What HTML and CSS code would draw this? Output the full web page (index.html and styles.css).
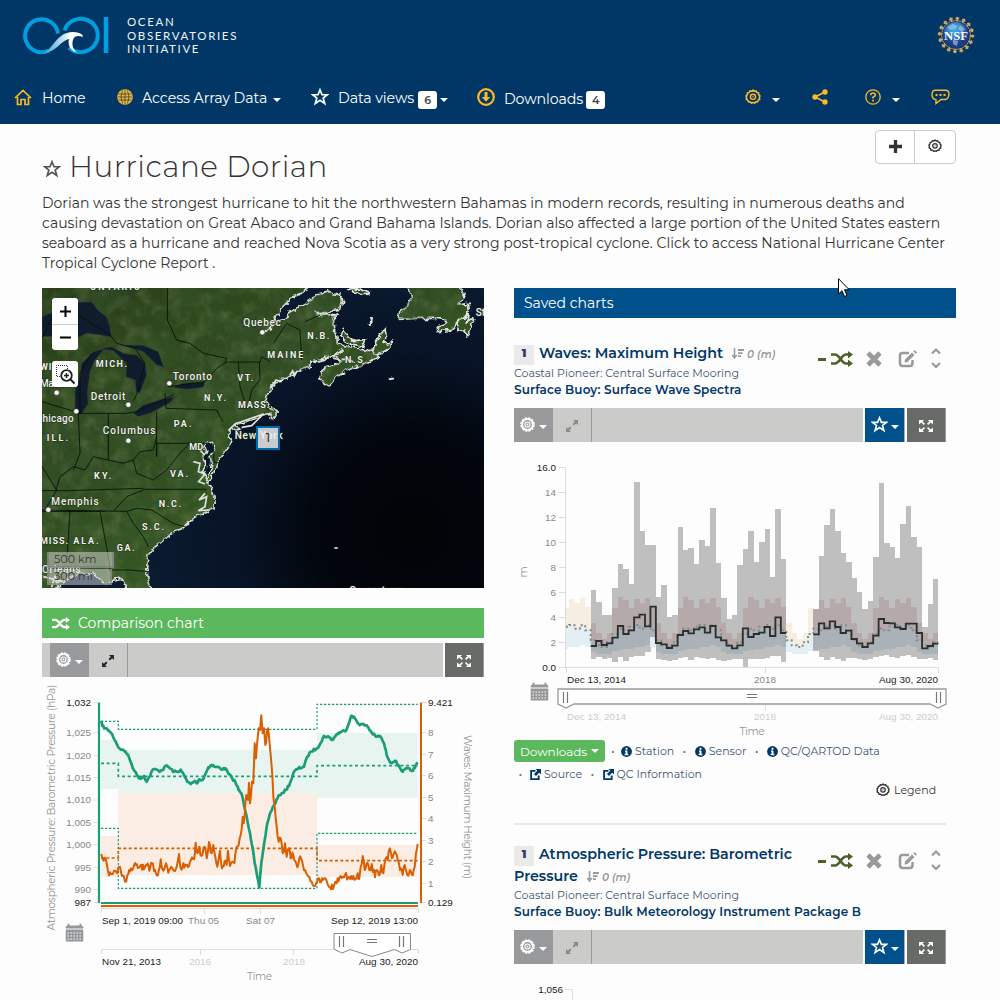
FILE: index.html
```html
<!DOCTYPE html>
<html lang="en">
<head>
<meta charset="utf-8">
<title>Hurricane Dorian - OOI Data Explorer</title>
<link rel="stylesheet" href="styles.css">
</head>
<body>
<svg class="sprite" aria-hidden="true">
  <symbol id="i-gear" viewBox="0 0 16 16"><path d="M8 1.1 9.3 2.3 11 1.9 11.8 3.5 13.5 3.9 13.7 5.6 15 7 14.3 8.5 14.7 10.2 13.2 11.1 12.6 12.8 10.9 12.9 9.6 14.1 8 13.5 6.4 14.1 5.1 12.9 3.4 12.8 2.8 11.1 1.3 10.2 1.7 8.5 1 7 2.3 5.6 2.5 3.9 4.2 3.5 5 1.9 6.7 2.3Z" fill="none" stroke="currentColor" stroke-width="1.6" stroke-linejoin="round"/><circle cx="8" cy="7.8" r="2.6" fill="none" stroke="currentColor" stroke-width="1.4"/><circle cx="8" cy="7.8" r=".7" fill="currentColor"/></symbol>
  <symbol id="i-gearf" viewBox="0 0 16 16"><circle cx="8" cy="8" r="5.7" fill="none" stroke="currentColor" stroke-width="2"/><circle cx="8" cy="8" r="7" fill="none" stroke="currentColor" stroke-width="1.6" stroke-dasharray="2.7 1"/><circle cx="8" cy="8" r="2.7" fill="none" stroke="currentColor" stroke-width="1.2"/><circle cx="8" cy="8" r="1" fill="currentColor"/></symbol>
  <symbol id="i-star" viewBox="0 0 16 16"><path d="M8 1.6 9.8 6H14.6L10.8 8.9 12.2 13.8 8 10.9 3.8 13.8 5.2 8.9 1.4 6H6.2Z" fill="none" stroke="currentColor" stroke-width="1.5"/></symbol>
  <symbol id="i-expand" viewBox="0 0 14 14"><path d="M8 1h5v5l-1.8-1.8-2.3 2.3-1.4-1.4 2.3-2.3zM6 13H1V8l1.8 1.8 2.3-2.3 1.4 1.4-2.3 2.3z" fill="currentColor"/></symbol>
  <symbol id="i-full" viewBox="0 0 14 14"><path d="M0 1h5L3.6 2.4 6 4.8 4.8 6 2.4 3.6 0 5.5zM14 1H9l1.4 1.4L8 4.8 9.2 6l2.4-2.4L14 5.5zM0 13h5l-1.4-1.4L6 9.2 4.8 8l-2.4 2.4L0 8.5zM14 13H9l1.4-1.4L8 9.2 9.2 8l2.4 2.4L14 8.5z" fill="currentColor"/></symbol>
  <symbol id="i-shuffle" viewBox="0 0 22 16"><path d="M0 3.5h4c4.5 0 6.500 9 11 9h3M0 12.500h4c4.500 0 6.500-9 11-9h3" fill="none" stroke="currentColor" stroke-width="2.700"/><path d="M17 0 22 3.600 17 7.400zM17 8.600l5 3.900-5 3.500z" fill="currentColor"/></symbol>
  <symbol id="i-x" viewBox="0 0 16 16"><path d="M2 2 14 14M14 2 2 14" stroke="currentColor" stroke-width="4.6"/></symbol>
  <symbol id="i-edit" viewBox="0 0 20 18"><path d="M11 3H4.5Q2 3 2 5.500V13Q2 16 4.500 16H12Q14.500 16 14.500 13V10" fill="none" stroke="currentColor" stroke-width="2.500"/><path d="M7 9.500 14 2.600 16.500 5 9.500 12 6.500 12.500zM15.300 1.300 16.500 0 19 2.500 17.700 3.700z" fill="currentColor"/></symbol>
  <symbol id="i-sort" viewBox="0 0 12 12"><path d="M2.5 0v9M.3 7 2.5 10 4.700 7" fill="none" stroke="currentColor" stroke-width="1.500"/><path d="M6 1h6v2H6zM6 4.200h4.500v1.800H6zM6 7.300h3V9H6z" fill="currentColor"/></symbol>
  <symbol id="i-info" viewBox="0 0 12 12"><circle cx="6" cy="6" r="5.900" fill="currentColor"/><path d="M5 2h2v2H5zM4.300 5H7v3.500h1V10H4V8.500h1V6.200h-.7z" fill="#fff"/></symbol>
  <symbol id="i-link" viewBox="0 0 12 12"><path d="M6 2H1.200V11H9.500V7" fill="none" stroke="currentColor" stroke-width="2"/><path d="M6 0h6v6L10 4 6.500 7.700 4.300 5.500 8 2z" fill="currentColor"/></symbol>
  <symbol id="i-cal" viewBox="0 0 18 19"><path d="M0 3 2 2V0h2v2h10V0h2v2l2 1v2H0zM0 6h18v12H0z" fill="#96989a"/><path d="M2 9.500h14M2 12.500h14M2 15.500h14" stroke="#fff" stroke-dasharray="1.500 1.500"/></symbol>
</svg>

<header class="top">
  <div class="brand">
    <svg class="logo" viewBox="0 0 86 38" width="86" height="38">
      <defs><linearGradient id="wave"><stop offset="0" stop-color="#1b9bd8"/><stop offset=".7" stop-color="#fff"/></linearGradient></defs>
      <g fill="none" stroke="#009fdf" stroke-width="4"><path d="M35 17.500A16.500 16.500 0 1 0 26 34.500"/><path d="M41.500 14.500A17 16.700 0 1 1 46 31.500"/><path d="M83 1v36" stroke-width="4.500"/></g>
      <path d="M19 37.500C27 35 31 25 38 20 44 15.500 51 15.500 56 17 59 18 60 19.500 60 21 55 18.800 51 20 50 24 48.500 29 50 33 54 37 47 34 44.500 29 46 23 37 25 34 36 19 37.500Z" fill="url(#wave)"/>
    </svg>
    <div class="brand-name">OCEAN<br>OBSERVATORIES<br>INITIATIVE</div>
    <svg class="nsf" viewBox="0 0 40 40" width="40" height="40">
      <defs><radialGradient id="globe" cx=".45" cy=".3"><stop offset="0" stop-color="#3cb0e4"/><stop offset=".6" stop-color="#3d7fc4"/><stop offset="1" stop-color="#1c3c85"/></radialGradient></defs>
      <circle cx="20" cy="20" r="14.500" fill="none" stroke="#b08c4c" stroke-width="1"/>
      <circle cx="20" cy="20" r="16" fill="none" stroke="#d3a566" stroke-width="4.500" stroke-dasharray="1.800 4.483"/>
      <circle cx="20" cy="20" r="16.600" fill="none" stroke="#d3a566" stroke-width="1.800" stroke-dasharray="3.800 2.719" stroke-dashoffset="1"/>
      <circle cx="20" cy="20" r="13" fill="url(#globe)"/><path d="M11 12l6-3 5 2-3 3-5 1zM24 10l5 4-3 3-4-3zM17 25l5 1-1 5-4-2z" fill="#a4c7e8" opacity=".65"/>
      <text x="20" y="24.500" text-anchor="middle" textLength="24" font-family="Liberation Serif,serif" font-weight="bold" font-size="12.500" fill="#fff">NSF</text>
    </svg>
  </div>
  <nav class="nav">
    <a class="n1"><svg width="18" height="17" viewBox="0 0 18 17"><path d="M1 9 9 1.500 17 9M3.500 8V15.500H7V10.500H11V15.500H14.500V8" fill="none" stroke="currentColor" stroke-width="1.700"/></svg><span>Home</span></a>
    <a class="n2"><svg width="16" height="16" viewBox="0 0 16 16"><circle cx="8" cy="8" r="7.800" fill="currentColor"/><path d="M8 1v14M1.500 5h13M1 8h14M1.500 11h13M5.500 1.500Q2.500 8 5.500 14.500M10.500 1.500Q13.500 8 10.500 14.500" fill="none" stroke="#003767" stroke-width=".7"/></svg><span>Access Array Data</span><i class="caret"></i></a>
    <a class="n3"><svg class="white" width="18" height="18"><use href="#i-star"/></svg><span>Data views</span><b class="count">6</b><i class="caret"></i></a>
    <a class="n4"><svg width="18" height="18" viewBox="0 0 18 18"><circle cx="9" cy="9" r="7.800" fill="none" stroke="currentColor" stroke-width="2.200"/><path d="M7.500 4h3v5h2.700L9 13.800 4.800 9h2.700z" fill="currentColor"/></svg><span>Downloads</span><b class="count">4</b></a>
    <a class="n5"><svg width="16" height="16"><use href="#i-gear"/></svg><i class="caret"></i></a>
    <a class="n6"><svg width="16" height="16" viewBox="0 0 16 16"><path d="M13 3 3 8l10 5" fill="none" stroke="currentColor" stroke-width="1.700"/><g fill="currentColor"><circle cx="13" cy="3" r="2.700"/><circle cx="3" cy="8" r="2.700"/><circle cx="13" cy="13" r="2.700"/></g></svg></a>
    <a class="n7"><svg width="16" height="16" viewBox="0 0 16 16"><circle cx="8" cy="8" r="7.200" fill="none" stroke="currentColor" stroke-width="1.300"/><path d="M5.700 6.200Q5.800 4 8 4T10.300 6.100Q10.300 7.300 8 8.300V9.500" fill="none" stroke="currentColor" stroke-width="1.600"/><path d="M7.200 10.700h1.700v1.700H7.200z" fill="currentColor"/></svg><i class="caret"></i></a>
    <a class="n8"><svg width="19" height="16" viewBox="0 0 19 16"><path d="M4 1.200H15Q18 1.500 18 5 18 9.500 14.500 10.500H10L5 14.500V10.800Q1 10 1 5.500 1 1.500 4 1.200Z" fill="none" stroke="currentColor" stroke-width="1.400"/><path d="M4.500 5h2v2h-2zM8.500 5h2v2h-2zM12.500 5h2v2h-2z" fill="currentColor"/></svg></a>
  </nav>
</header>

<main>
  <section class="intro">
    <div class="page-actions"><button><svg width="13" height="13" viewBox="0 0 13 13"><path d="M6.500 0v13M0 6.500h13" stroke="#333" stroke-width="3.300"/></svg></button><button><svg width="14" height="14"><use href="#i-gear"/></svg></button></div>
    <h1><svg width="20" height="20"><use href="#i-star"/></svg><span>Hurricane Dorian</span></h1>
    <p>Dorian was the strongest hurricane to hit the northwestern Bahamas in modern records, resulting in numerous deaths and<br>causing devastation on Great Abaco and Grand Bahama Islands. Dorian also affected a large portion of the United States eastern<br>seaboard as a hurricane and reached Nova Scotia as a very strong post-tropical cyclone. Click to access National Hurricane Center<br>Tropical Cyclone Report .</p>
  </section>

  <div class="columns">
    <section class="left">
      <div class="map">
        <svg viewBox="36 24 1326 900" width="442" height="300">
          <defs>
            <radialGradient id="sea" cx="1150" cy="750" r="850" gradientUnits="userSpaceOnUse"><stop offset="0" stop-color="#010306"/><stop offset=".35" stop-color="#02060d"/><stop offset=".62" stop-color="#071326"/><stop offset="1" stop-color="#0b1c31"/></radialGradient>
            <linearGradient id="ground" x2=".6" y2="1"><stop offset="0" stop-color="#2a3d1b"/><stop offset=".4" stop-color="#304b20"/><stop offset="1" stop-color="#385a22"/></linearGradient>
            <filter id="tex" x="0" y="0" width="100%" height="100%"><feTurbulence type="fractalNoise" baseFrequency=".022" numOctaves="5" seed="4"/><feColorMatrix values="0 0 0 0 .65  0 0 0 0 .72  0 0 0 0 .42  1.500 0 0 0 -.65"/></filter>
            <filter id="tex2" x="0" y="0" width="100%" height="100%"><feTurbulence type="fractalNoise" baseFrequency=".012" numOctaves="4" seed="12"/><feColorMatrix values="0 0 0 0 .04  0 0 0 0 .1  0 0 0 0 .03  2 0 0 0 -.8"/></filter>
            <filter id="jag" x="0" y="0" width="100%" height="100%"><feTurbulence type="fractalNoise" baseFrequency=".05" numOctaves="3" seed="9"/><feDisplacementMap in="SourceGraphic" scale="20" xChannelSelector="R" yChannelSelector="G"/></filter>
            <path id="land" d="M20 10H850L820 36 785 52 760 78 740 110 724 140 698 158 730 138 745 122 765 118 775 98 830 68 860 45 900 35 925 42 938 60 932 88 905 92 893 98 855 97 870 104 895 102 908 110 926 100 910 118 914 140 910 155 920 165 922 188 940 196 975 204 1010 212 1028 210 1035 222 1048 232 1030 238 990 258 950 272 920 290 895 320 880 310 868 290 872 275 890 260 920 252 935 240 912 235 908 228 925 225 935 210 915 222 880 238 845 246 838 262 815 268 790 282 770 295 745 300 725 322 714 340 708 360 716 382 738 388 738 410 720 415 725 400 695 404 680 414 650 425 610 436 630 443 600 452 600 465 604 480 592 505 580 522 568 535 560 560 550 580 538 610 530 595 540 575 545 550 540 525 555 515 546 490 524 492 530 515 520 535 530 560 518 580 540 612 552 652 552 685 520 700 485 720 465 740 435 752 420 765 400 780 370 805 355 825 350 860 355 900 365 940H300L275 895 250 900 225 910 195 884 155 880 125 892 100 905 90 920 20 940Z"/>
            <clipPath id="clip"><use href="#land"/><path d="M1105 118 1110 95 1130 75 1145 50 1135 24H1295L1298 50 1280 85 1260 115Z"/></clipPath>
          </defs>
          <rect x="36" y="24" width="1326" height="900" fill="url(#sea)"/>
          <g filter="url(#jag)"><rect x="0" y="0" width="1400" height="950" fill="none"/><g fill="url(#ground)" stroke="#e0e2dc" stroke-width="5" stroke-linejoin="round">
            <use href="#land"/>
            <path d="M1105 118 1110 95 1130 82 1145 50 1135 18H1290L1302 50 1290 75 1315 70 1318 90 1295 118 1315 100 1308 135 1320 118 1335 115 1325 145 1310 165 1302 150 1282 155 1290 120 1260 152 1220 155 1225 138 1250 130 1245 118 1215 115 1155 115ZM950 28 990 24 1020 42 995 44ZM940 148 952 170 975 182 1010 178 1000 200 950 188 932 168ZM1028 212 1040 178 1065 148 1070 172 1062 190 1085 186 1082 205 1040 228Z"/>
            <path d="M1015 138 1017 127 1032 118 1020 122ZM1076 297 1090 296 1078 298" fill="#ddd"/>
          </g></g>
          <g clip-path="url(#clip)"><rect x="36" y="24" width="1326" height="900" filter="url(#tex)" opacity=".28"/><rect x="36" y="24" width="1326" height="900" filter="url(#tex2)" opacity=".6"/></g>
          <g fill="#101b2b" stroke="#364338" stroke-width="2">
            <path d="M36 110 60 100 110 90 145 66 185 66 205 92 230 110 240 140 245 172 210 165 170 160 110 190 80 170 36 170Z"/>
            <path d="M135 400 135 330 150 290 155 250 190 215 225 205 195 240 180 275 172 340 175 370 155 402Z"/>
            <path d="M205 207 245 200 280 220 320 225 345 250 350 285 330 340 318 335 315 300 288 290 288 250 250 212ZM275 195 340 196 385 215 402 262 380 255 340 215Z"/>
            <path d="M310 400 340 375 395 358 434 350 420 368 360 400 325 410ZM425 322 460 310 525 305 520 322 470 328Z"/>
          </g>
          <g fill="none" stroke="#061008" stroke-width="3" opacity=".85">
            <path d="M36 175 75 95 145 105 240 165 260 190 315 205 345 250 325 330 310 365M412 24V120L440 180 480 190 520 220 590 235 585 248M415 320 525 305 560 265 590 246H690L695 230 720 245M185 220 150 280 150 400 36 365M140 400H290L320 395 430 345M405 340 408 385 560 390 570 410 580 425M235 400V540M380 395V530 490H540M340 628H530M36 632H110L340 625M36 690 290 694M36 695 225 694M120 695 110 850M210 695 235 830 240 870M235 870 300 870 355 875M290 694 320 685 365 690 430 730 470 742M290 694 310 730 340 770 355 800M250 694 290 650 340 630M78 630 90 590 130 560 165 570 190 530 235 540 280 550 310 540 330 515 370 510 380 470M310 540 320 580 370 600 410 570 450 520 480 490M480 490 520 520M625 246 630 320 650 385M655 380 665 330 690 300 688 246M626 385 705 380 718 390M730 190 770 130 810 150 815 240M825 125 870 105M30 550 80 630 45 690M145 400 150 520 130 570M550 490 552 548H568"/>
          </g>
          <g fill="none" stroke="#e0e2dc" stroke-width="5"><path d="M490 545 510 550 505 575 525 582 506 605 525 612M525 497 510 510 524 525M525 640 507 660 530 650 525 680 505 692 535 690M780 285l8-12 5 15 8-15M720 325l18-25 10 4M595 452l20-20 85-30-35 35-30 5M40 890l60 15M65 922l10-35 5 24 12-10M935 238h22l12 8"/></g>
          <path d="M913 804 923 803 922 805Z" fill="#ddd" stroke="#ddd" stroke-width="3"/>
          <g fill="#fff" stroke="#29331f" stroke-width="2"><circle cx="697" cy="157" r="8"/><circle cx="418" cy="310" r="8"/><circle cx="295" cy="374" r="8"/><circle cx="139" cy="394" r="8"/><circle cx="80" cy="338" r="8"/><circle cx="295" cy="482" r="8"/><circle cx="55" cy="689" r="8"/></g>
          <g class="places">
            <text x="640" y="139" textLength="112">Quebec</text><text x="428" y="300" textLength="118">Toronto</text><text x="182" y="361" textLength="104">Detroit</text><text x="30" y="321" textLength="106">Madison</text><text x="17" y="426" textLength="114">Chicago</text><text x="218" y="461" textLength="158">Columbus</text><text x="614" y="477" textLength="144">New York</text><text x="64" y="675" textLength="142">Memphis</text><text x="1337" y="108">St.</text><text x="36" y="878" textLength="116">Orleans</text><text x="958" y="942">Georgetown</text>
            <g class="st"><text x="180" y="31" textLength="150">ONTARIO</text><text x="30" y="270" textLength="64">WIS.</text><text x="197" y="260" textLength="94">MICH.</text><text x="622" y="302" textLength="48">VT.</text><text x="522" y="363" textLength="66">N.Y.</text><text x="624" y="383" textLength="94">MASS.</text><text x="431" y="440" textLength="54">PA.</text><text x="712" y="235" textLength="108">MAINE</text><text x="832" y="177" textLength="66">N.B.</text><text x="945" y="248" textLength="66">N.S.</text><text x="50" y="482" textLength="64">ILL.</text><text x="192" y="596" textLength="52">KY.</text><text x="420" y="590" textLength="54">VA.</text><text x="478" y="510" textLength="48">MD.</text><text x="386" y="681" textLength="68">N.C.</text><text x="336" y="749" textLength="66">S.C.</text><text x="30" y="791" textLength="84">MISS.</text><text x="130" y="791" textLength="76">ALA.</text><text x="260" y="813" textLength="54">GA.</text></g>
          </g>
        </svg>
        <div class="map-zoom"><b><svg width="11" height="11"><path d="M5.500 0v11M0 5.500h11" stroke="#000" stroke-width="2"/></svg></b><b><svg width="11" height="11"><path d="M0 5.500h11" stroke="#000" stroke-width="2"/></svg></b></div>
        <div class="map-box"><svg width="26" height="26"><path d="M4.500 15V4.500H15M15.500 5v3M5 15.500h3" fill="none" stroke="#333" stroke-dasharray="1 1"/><circle cx="14.500" cy="14.500" r="5.300" fill="#fff" stroke="#222" stroke-width="1.800"/><path d="M14.500 12v5M12 14.500h5" stroke="#222" stroke-width="1.500"/><path d="M18.500 18.500l4 4" stroke="#222" stroke-width="2.200"/></svg></div>
        <div class="scale s1">500 km</div><div class="scale s2">300 mi</div>
        <div class="pin">1</div>
      </div>
      <h2 class="bar green"><svg width="18" height="13"><use href="#i-shuffle"/></svg>Comparison chart</h2>
      <div class="tools padded"><span class="t-gear"><svg width="15" height="15"><use href="#i-gearf"/></svg><i class="caret"></i></span><span class="t-exp dark"><svg width="14" height="14"><use href="#i-expand"/></svg></span><span class="t-fill"></span><span class="t-full"><svg width="14" height="14"><use href="#i-full"/></svg></span></div>
      <svg class="chart" id="compare" viewBox="42 677 442 323" width="442" height="323">
        <g transform="translate(30 600) scale(.33333)">
          <g fill="#e8f4f0"><path d="M213 420H265V450H861V580H265V567H213z"/><path d="M861 399H1163V593H861z"/></g>
          <g fill="#fcede4"><path d="M265 580H861V825H265z"/><path d="M213 708H265V830H213z"/><path d="M861 735H1163V831H861z"/></g>
          <g fill="none" stroke="#1b9e77" stroke-width="3.500" stroke-dasharray="7 5"><path d="M213 364H265V388H861V313H1163M213 685H265V865H861V700H1163"/><path d="M213 490H265V529H861V497H1163" stroke-width="5" stroke-dasharray="9 8"/></g>
          <path d="M213 774H265V745H861V782H1163" fill="none" stroke="#d95f02" stroke-width="5" stroke-dasharray="9 7"/>
        </g>
        <path id="pressure" fill="none" stroke="#1b9e77" stroke-width="2.700" stroke-linejoin="round"/>
        <path id="waves" fill="none" stroke="#d95f02" stroke-width="2" stroke-linejoin="round"/>
        <path d="M99 702.500V903M101 903H418" stroke="#1b9e77" stroke-width="2.200" fill="none"/><path d="M421 702.500V903M101 906H418" stroke="#d95f02" stroke-width="2" fill="none"/>
        <g fill="none" stroke="#ddd"><path d="M101.500 913V908.500H418.500V913M204.500 909v5M260.500 909v5M101.500 954V949.500H418.500V954M200.500 950v5M293.500 950v5"/></g>
        <path id="yticks" stroke="#ddd" fill="none"/>
        <g class="ax end"><text x="91" y="706" class="dk">1,032</text><text x="91" y="736">1,025</text><text x="91" y="759">1,020</text><text x="91" y="781">1,015</text><text x="91" y="803">1,010</text><text x="91" y="826">1,005</text><text x="91" y="848">1,000</text><text x="91" y="871">995</text><text x="91" y="893">990</text><text x="91" y="906" class="dk">987</text></g>
        <g class="ax"><text x="428" y="706" class="dk">9.421</text><text x="428" y="736">8</text><text x="428" y="758">7</text><text x="428" y="779">6</text><text x="428" y="801">5</text><text x="428" y="822">4</text><text x="428" y="844">3</text><text x="428" y="865">2</text><text x="428" y="887">1</text><text x="428" y="906" class="dk">0.129</text>
          <text x="102" y="924" class="dk" textLength="81">Sep 1, 2019 09:00</text><text x="188" y="924" textLength="31">Thu 05</text><text x="246" y="924" textLength="29">Sat 07</text><text x="331" y="924" class="dk" textLength="87">Sep 12, 2019 13:00</text><text x="102" y="965" class="dk" textLength="59">Nov 21, 2013</text><text x="189" y="965" class="pale">2016</text><text x="283" y="965" class="pale">2018</text><text x="359" y="965" class="dk" textLength="59">Aug 30, 2020</text></g>
        <g class="lab"><text x="247" y="980" textLength="25">Time</text><text transform="translate(55 930.500) rotate(-90)" textLength="246">Atmospheric Pressure: Barometric Pressure (hPa)</text><text transform="translate(464 735) rotate(90)" textLength="144">Waves: Maximum Height (m)</text></g>
        <path d="M334 933.500H410.500V949.500L402 953 394.500 949.500 372 956.500 350 949.500 342 953 334 949Z" fill="#fff" stroke="#888"/><path d="M339.500 936v11M343.500 936v11M399.500 936v11M403.500 936v11M367 939.500h10M367 942.500h10" stroke="#777" stroke-width="1.200"/>
        <use href="#i-cal" x="65.500" y="923.500" width="18" height="19"/>
      </svg>
    </section>

    <section class="right">
      <h2 class="bar blue">Saved charts</h2>
      <article class="card first">
        <div class="head"><div class="titles"><h3><b class="no">1</b>Waves: Maximum Height<em><svg width="12" height="12"><use href="#i-sort"/></svg>0 (m)</em></h3><div class="sub">Coastal Pioneer: Central Surface Mooring</div><div class="inst i1">Surface Buoy: Surface Wave Spectra</div></div>
          <div class="acts"><i class="dash"></i><svg class="sh" width="22" height="16"><use href="#i-shuffle"/></svg><svg class="xx" width="16" height="16"><use href="#i-x"/></svg><svg class="ed" width="20" height="18"><use href="#i-edit"/></svg><svg class="ud" width="10" height="22"><path d="M1 6.500 5 2.500 9 6.500M1 16 5 20 9 16" fill="none" stroke="currentColor" stroke-width="2.200"/></svg></div></div>
        <div class="tools"><span class="t-gear"><svg width="15" height="15"><use href="#i-gearf"/></svg><i class="caret"></i></span><span class="t-exp"><svg width="14" height="14"><use href="#i-expand"/></svg></span><span class="t-fill"></span><span class="t-star"><svg width="17" height="17"><use href="#i-star"/></svg><i class="caret"></i></span><span class="t-full"><svg width="14" height="14"><use href="#i-full"/></svg></span></div>
        <svg class="chart" viewBox="514 442 442 298" width="442" height="298">
          <g id="bars" transform="translate(500 450) scale(.33333)"></g>
          <path d="M559 467.500H565.500V667.500M559 667.500H938.500V673M566.500 668v5M765.500 668v5M559 492.500h6M559 517.500h6M559 542.500h6M559 567.500h6M559 592.500h6M559 617.500h6M559 642.500h6M765.500 705v5" fill="none" stroke="#ddd"/>
          <g class="ax end"><text x="556" y="471" class="dk">16.0</text><text x="556" y="496">14</text><text x="556" y="521">12</text><text x="556" y="546">10</text><text x="556" y="571">8</text><text x="556" y="596">6</text><text x="556" y="621">4</text><text x="556" y="646">2</text><text x="556" y="671" class="dk">0.0</text></g>
          <g class="ax"><text x="567" y="683" class="dk" textLength="59">Dec 13, 2014</text><text x="754" y="683">2018</text><text x="879" y="683" class="dk" textLength="59">Aug 30, 2020</text><text x="567" y="720" class="pale" textLength="59">Dec 13, 2014</text><text x="754" y="720" class="pale">2018</text><text x="879" y="720" class="pale" textLength="59">Aug 30, 2020</text></g>
          <g class="lab"><text x="739.500" y="735" textLength="25">Time</text><text transform="translate(527 577.500) rotate(-90)" textLength="10">m</text></g>
          <path d="M558 689H946V704L938 708 930 704H574L566 708 558 704Z" fill="#fff" stroke="#999" stroke-width="1.300"/><path d="M563.500 692v11M567.500 692v11M936.500 692v11M940.500 692v11M747 694.500h10M747 697.500h10" stroke="#777" stroke-width="1.200"/>
          <use href="#i-cal" x="530.500" y="682.500" width="18" height="19"/>
        </svg>
        <div class="links"><span class="dl">Downloads<i class="caret"></i></span><span class="dot d1">·</span><a><svg width="11" height="11"><use href="#i-info"/></svg>Station</a><span class="dot">·</span><a><svg width="11" height="11"><use href="#i-info"/></svg>Sensor</a><span class="dot">·</span><a><svg width="11" height="11"><use href="#i-info"/></svg>QC/QARTOD Data</a></div>
        <div class="links l2"><span class="dot d2">·</span><a><svg width="11" height="11"><use href="#i-link"/></svg>Source</a><span class="dot">·</span><a><svg width="11" height="11"><use href="#i-link"/></svg>QC Information</a></div>
        <div class="legend"><svg width="14" height="14"><use href="#i-gear"/></svg>Legend</div>
      </article>
      <article class="card second">
        <div class="head"><div class="titles"><h3><b class="no">1</b>Atmospheric Pressure: Barometric<br>Pressure<em><svg width="12" height="12"><use href="#i-sort"/></svg>0 (m)</em></h3><div class="sub">Coastal Pioneer: Central Surface Mooring</div><div class="inst i2">Surface Buoy: Bulk Meteorology Instrument Package B</div></div>
          <div class="acts"><i class="dash"></i><svg class="sh" width="22" height="16"><use href="#i-shuffle"/></svg><svg class="xx" width="16" height="16"><use href="#i-x"/></svg><svg class="ed" width="20" height="18"><use href="#i-edit"/></svg><svg class="ud" width="10" height="22"><path d="M1 6.500 5 2.500 9 6.500M1 16 5 20 9 16" fill="none" stroke="currentColor" stroke-width="2.200"/></svg></div></div>
        <div class="tools"><span class="t-gear"><svg width="15" height="15"><use href="#i-gearf"/></svg><i class="caret"></i></span><span class="t-exp"><svg width="14" height="14"><use href="#i-expand"/></svg></span><span class="t-fill"></span><span class="t-star"><svg width="17" height="17"><use href="#i-star"/></svg><i class="caret"></i></span><span class="t-full"><svg width="14" height="14"><use href="#i-full"/></svg></span></div>
        <svg class="chart" viewBox="514 964 442 36" width="442" height="36"><g class="ax end"><text x="563" y="993" class="dk">1,056</text></g><path d="M566 989.500H572.500V1000" fill="none" stroke="#ddd"/></svg>
      </article>
    </section>
  </div>
</main>
<svg class="cursor" width="12" height="20" viewBox="0 0 12 20"><path d="M.5.700V16L4 12.700 6.500 18.500 9 17.400 6.500 11.800H11.300Z" fill="#fff" stroke="#000"/></svg>
<script src="charts.js"></script>
</body>
</html>
```
FILE: styles.css
```css
* { box-sizing: border-box; }
body { margin: 0; width: 1000px; height: 1000px; overflow: hidden; background: #fdfdfd; color: #333; font-family: Montserrat, Inter, "Open Sans", sans-serif; font-size: 14px; position: relative; }
svg { display: block; flex: none; }
.sprite { position: absolute; width: 0; height: 0; }
h1, h2, h3, p { margin: 0; font-weight: 400; }
.caret { width: 0; height: 0; border: 4px solid transparent; border-top-color: #fff; border-bottom: 0; flex: none; }

.top { height: 124px; background: #003767; color: #fff; }
.brand { height: 72px; display: flex; padding: 16px 24px 0 23px; }
.brand-name { margin: -1px auto 0 18px; font: 11.5px/13.6px Lato, sans-serif; letter-spacing: 1.65px; color: #f0f4f8; }
.nsf { margin: -1px 0 0; }
.nav { height: 50px; display: flex; align-items: center; font-size: 14.2px; color: #fcb827; }
.nav a { display: flex; align-items: center; color: #fcb827; white-space: nowrap; }
.nav span { color: #fff; margin-top: 1px; }
.nav .white { color: #fff; }
.nav .caret { margin-left: 6px; margin-top: 5px; }
.n1 { width: 103px; padding-left: 14px; gap: 10px; }
.n1 span { letter-spacing: -.15px; }
.n2 { width: 194px; padding-left: 14px; }
.n2 span { margin-left: 9px; letter-spacing: -.06px; }
.n3 { width: 166px; padding-left: 14px; }
.n3 span { margin-left: 9px; letter-spacing: -.08px; }
.n4 { width: 270px; padding-left: 14px; }
.nav .n4 span { margin-left: 9px; margin-top: 3px; letter-spacing: -.1px; }
.n3 .count { margin-left: 4px; margin-top: 5px; }
.nav .n3 .caret { margin-left: 3px; }
.n4 .count { margin-left: 3px; margin-top: 6px; }
.count { background: #fff; color: #444; width: 19px; height: 18px; border-radius: 3px; font-size: 11px; font-weight: 600; line-height: 18px; text-align: center; }
.n5 { padding-left: 12px; width: 79px; }
.nav .n5 .caret, .nav .n7 .caret { margin-left: 11px; }
.n6 { width: 53px; }
.n7 { width: 66px; }

.intro { position: relative; height: 164px; padding: 24px 42px 0; }
.page-actions { position: absolute; left: 875px; top: 6px; width: 81px; height: 34px; display: flex; border: 1px solid #ccc; border-radius: 4px; background: #fff; }
.page-actions button { width: 38px; display: flex; align-items: center; justify-content: center; background: none; border: 0; color: #333; padding: 0 0 2px; }
.page-actions button + button { width: 41px; border-left: 1px solid #ccc; }
h1 { display: flex; align-items: center; height: 36px; font-size: 29.5px; gap: 8px; font-weight: 350; letter-spacing: .45px; color: #333; }
h1 svg { margin-top: 6px; color: #555; padding: 1px; margin-right: -1px; }
.intro p { margin-top: 9px; line-height: 20px; font-size: 14px; letter-spacing: .01px; white-space: nowrap; }

.columns { display: grid; grid-template-columns: 442px 442px; gap: 30px; padding-left: 42px; }
.map { position: relative; height: 300px; overflow: hidden; }
.places text { font: 500 30px Roboto, sans-serif; fill: #f0f1ec; paint-order: stroke; stroke: #20301a; stroke-width: 3px; }
.places .st text { font: 700 27px Roboto, sans-serif; }
.map-zoom { position: absolute; left: 10px; top: 10px; width: 26px; height: 52px; background: #fff; border-radius: 3px; }
.map-zoom b { display: flex; height: 26px; align-items: center; justify-content: center; }
.map-zoom b + b { border-top: 1px solid #ccc; }
.map-box { position: absolute; left: 10px; top: 73px; width: 26px; height: 26px; background: #fff; border-radius: 3px; }
.scale { position: absolute; left: 5px; height: 16px; font-size: 11px; line-height: 15px; letter-spacing: .1px; padding-left: 5px; color: #333; background: rgba(220,220,220,.5); border: 2px solid rgba(120,120,120,.6); border-top-width: 0; }
.s1 { top: 264px; width: 67px; }
.s2 { top: 281px; width: 65px; }
.pin { position: absolute; left: 214px; top: 138px; width: 24px; height: 24px; border: 2px solid #0069a8; background: rgba(240,240,240,.83); text-align: center; font-size: 12px; font-weight: 500; line-height: 19px; color: #333; }
.bar { height: 30px; line-height: 30px; padding-left: 10px; color: #fff; font-size: 14px; display: flex; align-items: center; }
.green { background: #5cb85c; margin: 20px 0 5px; gap: 8px; }
.blue { background: #00518b; }
.tools { display: flex; height: 34px; width: 432px; background: #cbcbca; }
.tools.padded { width: 442px; padding-left: 8px; }
.tools span { display: flex; align-items: center; justify-content: center; flex: none; }
.t-gear { width: 39px; background: #98999b; color: #fff; gap: 4px; }
.t-gear svg, .t-star svg { margin-top: -2px; }
.t-gear .caret, .t-star .caret { margin-top: 4px; }
.t-exp { width: 39px; border-right: 1px solid #98999b; color: #888b8a; }
.t-exp svg { margin-top: 2px; }
.dark { color: #24282c; }
.tools .t-fill { flex: 1; border-right: 2px solid #fdfdfd; }
.t-star { width: 39px; margin-right: 3px; background: #00518b; color: #fff; gap: 3px; box-shadow: 1px 0 #aaa, 3px 0 #fdfdfd; }
.t-full { width: 39px; background: #686a68; color: #fff; border-right: 1px solid #999; }
.t-full svg { margin-top: 2px; }
.chart { overflow: visible; }
.ax text { font: 9.900px "Liberation Sans", Arial, sans-serif; fill: #858887; }
.ax.end text { text-anchor: end; }
.ax text.dk { fill: #222; }
.ax text.pale { fill: #c9cecb; }
.lab text { font-size: 10.500px; fill: #939694; }

.head { display: flex; justify-content: space-between; width: 432px; }
.first .head { height: 90px; padding-top: 25px; }
.second .head { height: 104px; padding-top: 20px; }
.titles { white-space: nowrap; width: 290px; }
h3 { font-size: 14.250px; line-height: 20px; font-weight: 600; color: #003767; }
.no { display: inline-block; width: 20px; height: 20px; margin-right: 5px; background: #eaeaea; color: #333a66; text-align: center; font-size: 11px; line-height: 16px; vertical-align: 1px; }
h3 em { font-size: 10.500px; font-weight: 600; color: #999; margin-left: 9px; }
h3 em svg { display: inline-block; vertical-align: -2px; margin-right: 3px; }
.sub { font-size: 11px; line-height: 17px; letter-spacing: .02px; color: #3d5570; }
.inst { font-size: 12px; line-height: 16px; font-weight: 600; letter-spacing: .13px; color: #003767; }
.second h3 { margin-top: -1px; }
.second .sub { margin-top: -1px; }
.acts { display: flex; align-items: flex-start; color: #98999b; padding: 5px 5px 0 0; }
.dash { width: 8px; height: 3px; background: #4d602b; margin: 10px 5px 0 0; }
.sh { color: #4d602b; margin: 3px 13px 0 0; }
.xx { margin: 3px 16px 0 0; }
.ed { margin: 2px 13px 0 0; }
.ud { margin-top: -1px; }
.links { display: flex; align-items: center; height: 22px; font-size: 11px; color: #3d5570; white-space: nowrap; }
.links a { display: flex; align-items: center; gap: 3px; }
.links svg { color: #003767; }
.dl { display: flex; align-items: center; gap: 4px; width: 91px; height: 22px; padding-left: 6px; background: #5cb85c; color: #fff; border-radius: 3px; font-size: 12px; letter-spacing: -.06px; }
.dot { width: 20.500px; text-align: center; color: #777; font-weight: 700; }
.d1 { width: 16px; }
.d2 { width: 13px; margin-right: 3px; }
.l2 { margin-top: 1px; }
.legend { display: flex; align-items: center; gap: 4px; height: 14px; margin: -2px 0 0 362px; font-size: 11px; color: #333; }
.second { position: relative; margin-top: 26px; width: 442px; }
.second::before { content: ""; display: block; height: 2px; width: 432px; background: #e8e8e8; }
.second .tools { margin-top: 1px; }
.cursor { position: absolute; left: 838px; top: 278px; }
```
FILE: charts.js
```js
// Monthly wave heights: top of range, mean, bottom of range (thirds of a pixel).
const tops = [421,456,495,496,413,343,358,403,95,242,286,286,440,404,502,494,231,300,295,343,269,289,174,339,445,507,494,346,296,244,336,275,236,381,178,328,0,0,0,0,0,478,317,226,177,243,310,337,383,427,478,454,322,99,279,290,325,223,169,261,290,530,461,387];
const mean = [588,573,585,580,563,528,552,541,502,494,529,470,579,583,594,587,555,543,550,538,532,548,528,562,571,587,595,586,535,561,552,548,531,558,502,549,0,0,0,0,0,553,520,535,514,531,549,542,567,580,591,580,557,507,519,520,532,537,521,521,549,595,588,581];
const low = [628,621,626,624,636,621,632,621,619,617,607,562,627,629,632,630,625,622,629,621,625,628,625,631,632,629,626,626,651,628,627,626,624,619,618,636,0,0,0,0,0,603,621,629,620,627,633,625,623,627,630,628,622,619,615,622,625,618,616,621,626,628,625,631];
const climTop = [518,548,568,548,474,442,451,474,447,460,445,472];
const climMid = [571,586,591,577,552,536,541,530,525,536,526,541];
const climLow = [606,612,612,612,604,600,598,596,592,590,586,592];
const step = 16.3, start = 272;
const rect = (x, a, b, w, c) => `<rect x="${x.toFixed(1)}" y="${a}" width="${w + .3}" height="${Math.max(0, b - a)}" fill="${c}" shape-rendering="crispEdges"/>`;
let html = '', line = '', dots = '';
for (let i = -5; i < 64; i++) {
  const x = i === -5 ? 198 : start + i * step, w = i === -5 ? 9 : step;
  const k = (i + 12) % 12, on = i >= 0 && tops[i];
  if (on) html += rect(x, tops[i], low[i], w, '#bfbfbf');
  const t = on ? Math.max(climTop[k], tops[i]) : climTop[k];
  html += rect(x, t, climMid[k], w, on ? '#b5a9a9' : '#f7eee2');
  const b = on ? Math.min(climLow[k], low[i]) : climLow[k];
  html += rect(x, climMid[k], b, w, on ? '#aab1b7' : '#e2f0f3');
  if (on && low[i] < climLow[k]) html += rect(x, low[i], climLow[k], w, '#e2f0f3');
  dots += (dots ? 'L' : 'M') + `${x} ${climMid[k]}H${x + w}`;
  if (on) line += (i && tops[i - 1] ? 'L' : 'M') + `${x} ${mean[i]}H${x + step}`;
}
html += `<path d="${dots}" fill="none" stroke="#858b8b" stroke-width="6" stroke-dasharray="6 8"/><path d="${line}" fill="none" stroke="#2b302f" stroke-width="5.5"/>`;
document.getElementById('bars').innerHTML = html;

const pressure = '214,362 217,378 226,385 237,392 247,404 257,425 266,443 276,449 287,455 297,472 305,494 314,514 324,530 332,536 342,528 350,545 358,531 367,511 376,507 386,513 397,510 410,496 420,505 432,515 443,516 452,509 462,526 472,545 482,552 494,543 500,550 508,538 518,540 526,523 535,502 545,495 556,501 566,502 578,508 586,505 596,522 606,534 616,546 626,570 634,580 640,603 650,650 660,700 668,745 674,790 682,830 688,863 694,790 704,720 712,670 722,635 734,612 748,585 755,580 768,570 780,550 792,515 805,505 822,500 832,470 842,455 860,445 875,425 882,408 898,412 908,420 920,402 935,395 950,388 963,348 974,354 986,372 1010,376 1025,398 1038,410 1050,408 1062,430 1070,465 1082,488 1095,482 1105,495 1118,515 1132,505 1145,513 1155,503 1163,487';
const waves = '214,762 221,782 227,776 234,812 243,822 252,812 262,820 270,800 278,826 285,845 292,826 300,815 310,805 318,795 326,803 334,794 342,808 350,796 358,812 366,790 375,810 384,826 392,778 400,812 408,790 415,818 424,800 432,812 440,800 447,762 452,806 460,790 468,797 480,785 492,778 497,728 502,760 508,740 514,768 524,740 530,775 537,726 542,758 550,735 556,770 562,800 570,752 576,805 584,782 590,795 594,752 600,798 606,785 613,790 620,740 626,735 632,705 638,650 641,670 649,585 654,600 657,548 660,610 666,545 670,550 674,430 678,475 686,385 690,390 694,346 698,400 702,385 706,435 714,385 719,435 725,500 730,590 734,620 740,680 746,725 752,715 758,760 765,730 770,770 776,745 782,775 790,765 798,788 802,802 808,775 816,782 825,810 832,825 838,830 845,845 852,858 862,842 870,847 882,835 892,850 900,862 912,857 916,845 920,850 932,828 945,825 955,832 970,828 976,838 983,820 988,836 992,800 998,768 1004,810 1010,790 1018,810 1025,792 1035,832 1040,810 1046,825 1054,795 1060,820 1067,775 1073,780 1080,745 1086,775 1092,760 1100,765 1110,810 1118,825 1124,795 1132,825 1140,810 1148,825 1154,800 1158,760 1163,732';
let seed = 7;
const rnd = () => (seed = (seed * 16807) % 2147483647) / 2147483647 - .5;
function trace(id, data, noise) {
  const p = data.split(' ').map(s => s.split(',').map(Number));
  const out = [];
  p.forEach(([x, y], i) => {
    if (i) {
      const [a, b] = p[i - 1], n = Math.max(1, Math.round((x - a) / 3));
      for (let j = 1; j < n; j++) out.push([a + (x - a) * j / n, b + (y - b) * j / n + rnd() * noise]);
    }
    out.push([x, y]);
  });
  document.getElementById(id).setAttribute('d', 'M' + out.map(([x, y]) => (30 + x / 3).toFixed(1) + ' ' + (600 + y / 3).toFixed(1)).join('L'));
}
trace('pressure', pressure, 7);
trace('waves', waves, 22);

const left = [702.5,732.5,755.5,777.5,800,822.5,844.5,867.5,889.5,902.5];
const right = [702.5,732.5,754.5,775.5,797.5,818.5,840.5,861.5,883.5,902.5];
document.getElementById('yticks').setAttribute('d', left.map(y => `M94 ${y}h4`).join('') + right.map(y => `M422 ${y}h4`).join(''));
```
